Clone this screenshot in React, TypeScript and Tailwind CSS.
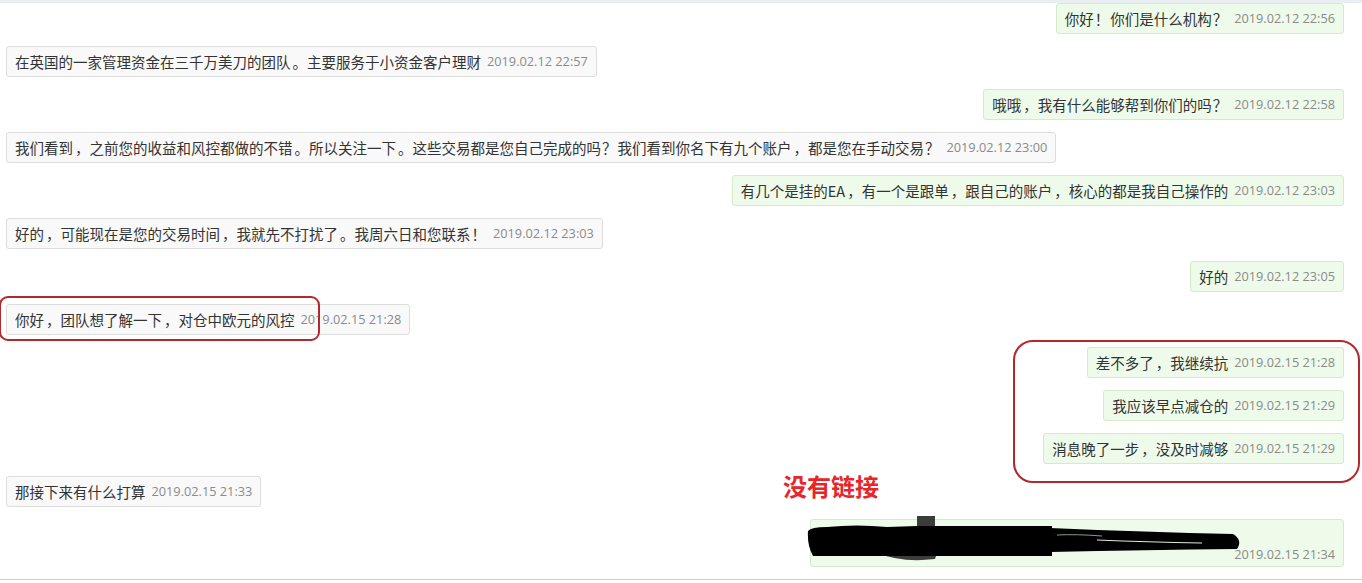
type Msg = { side: "l" | "r"; text: string; time: string };

const msgs: Msg[] = [
  { side: "r", text: "你好！你们是什么机构？", time: "2019.02.12 22:56" },
  { side: "l", text: "在英国的一家管理资金在三千万美刀的团队。主要服务于小资金客户理财", time: "2019.02.12 22:57" },
  { side: "r", text: "哦哦，我有什么能够帮到你们的吗？", time: "2019.02.12 22:58" },
  { side: "l", text: "我们看到，之前您的收益和风控都做的不错。所以关注一下。这些交易都是您自己完成的吗？我们看到你名下有九个账户，都是您在手动交易？", time: "2019.02.12 23:00" },
  { side: "r", text: "有几个是挂的EA，有一个是跟单，跟自己的账户，核心的都是我自己操作的", time: "2019.02.12 23:03" },
  { side: "l", text: "好的，可能现在是您的交易时间，我就先不打扰了。我周六日和您联系！", time: "2019.02.12 23:03" },
  { side: "r", text: "好的", time: "2019.02.12 23:05" },
  { side: "l", text: "你好，团队想了解一下，对仓中欧元的风控", time: "2019.02.15 21:28" },
  { side: "r", text: "差不多了，我继续抗", time: "2019.02.15 21:28" },
  { side: "r", text: "我应该早点减仓的", time: "2019.02.15 21:29" },
  { side: "r", text: "消息晚了一步，没及时减够", time: "2019.02.15 21:29" },
  { side: "l", text: "那接下来有什么打算", time: "2019.02.15 21:33" },
];

// full-width punctuation sits a little wider in the original
function Text({ s }: { s: string }) {
  const parts = s.split(/([，。？！])/);
  return (
    <span className="text-[14.5px] text-[#333333]">
      {parts.map((p, i) =>
        /^[，。？！]$/.test(p) ? (
          <span key={i} className={p === "？" || p === "！" ? "mx-[1px]" : "ml-[2px]"}>
            {p}
          </span>
        ) : (
          p
        )
      )}
    </span>
  );
}

function Bubble({ m }: { m: Msg }) {
  const right = m.side === "r";
  return (
    <div className={right ? "flex justify-end" : "flex justify-start"}>
      <div
        className={
          "flex h-[31px] items-center gap-[6px] whitespace-nowrap rounded-[3px] border px-[8px] " +
          (right ? "border-[#d4eacb] bg-[#eefbeb]" : "border-[#dddddd] bg-[#f9f9f9]")
        }
      >
        <Text s={m.text} />
        <span className="font-['Open_Sans',sans-serif] text-[12.75px] text-[#8a8a8a]">{m.time}</span>
      </div>
    </div>
  );
}

function Scribble() {
  return (
    <svg className="absolute left-[-4px] top-[-5px]" width="440" height="50" viewBox="0 0 440 50">
      <rect x="110" y="1" width="18" height="14" fill="#3a3d3a" />
      <path d="M70 38 Q95 48 128 44 L130 38 Z" fill="#3a3d3a" />
      <path d="M1 16 Q4 12 20 12 Q50 9 80 12 L110 11 L245 11 L245 41 L6 41 Q0 30 1 16 Z" fill="#000" />
      <path d="M243 13 Q340 17 426 19 Q436 25 430 34 Q340 35 243 37 Z" fill="#000" />
      <path d="M290 25 Q340 27 395 28" stroke="#dce9dc" strokeWidth="1.2" fill="none" />
      <path d="M250 20 Q270 19 295 21" stroke="#8a9a8a" strokeWidth="1" fill="none" />
    </svg>
  );
}

export default function App() {
  return (
    <div className="relative h-[583px] w-[1362px] overflow-hidden bg-white font-['Noto_Sans_CJK_SC','Noto_Sans',sans-serif]">
      <div className="h-[3px] bg-[#e8eef2]" />
      <div className="flex flex-col gap-[12px] pl-[6px] pr-[18px]">
        {msgs.map((m, i) => (
          <Bubble key={i} m={m} />
        ))}
        <div className="flex justify-end">
          <div className="relative h-[48px] w-[534px] rounded-[3px] border border-[#d4eacb] bg-[#eefbeb]">
            <Scribble />
            <div className="absolute bottom-[3px] right-[8px] font-['Open_Sans',sans-serif] text-[12.75px] leading-[18px] text-[#8a8a8a]">
              2019.02.15 21:34
            </div>
          </div>
        </div>
      </div>
      <div className="mt-[12px] h-px bg-[#cfcfcf]" />

      <div className="absolute left-[-1px] top-[296px] h-[45px] w-[321px] rounded-[9px] border-2 border-[#b3282d]" />
      <div className="absolute left-[1013px] top-[340px] h-[143px] w-[347px] rounded-[20px] border-2 border-[#b3282d]" />
      <div className="absolute left-[783px] top-[470px] text-[24px] font-bold leading-[32px] text-[#e8262a]">没有链接</div>
    </div>
  );
}
